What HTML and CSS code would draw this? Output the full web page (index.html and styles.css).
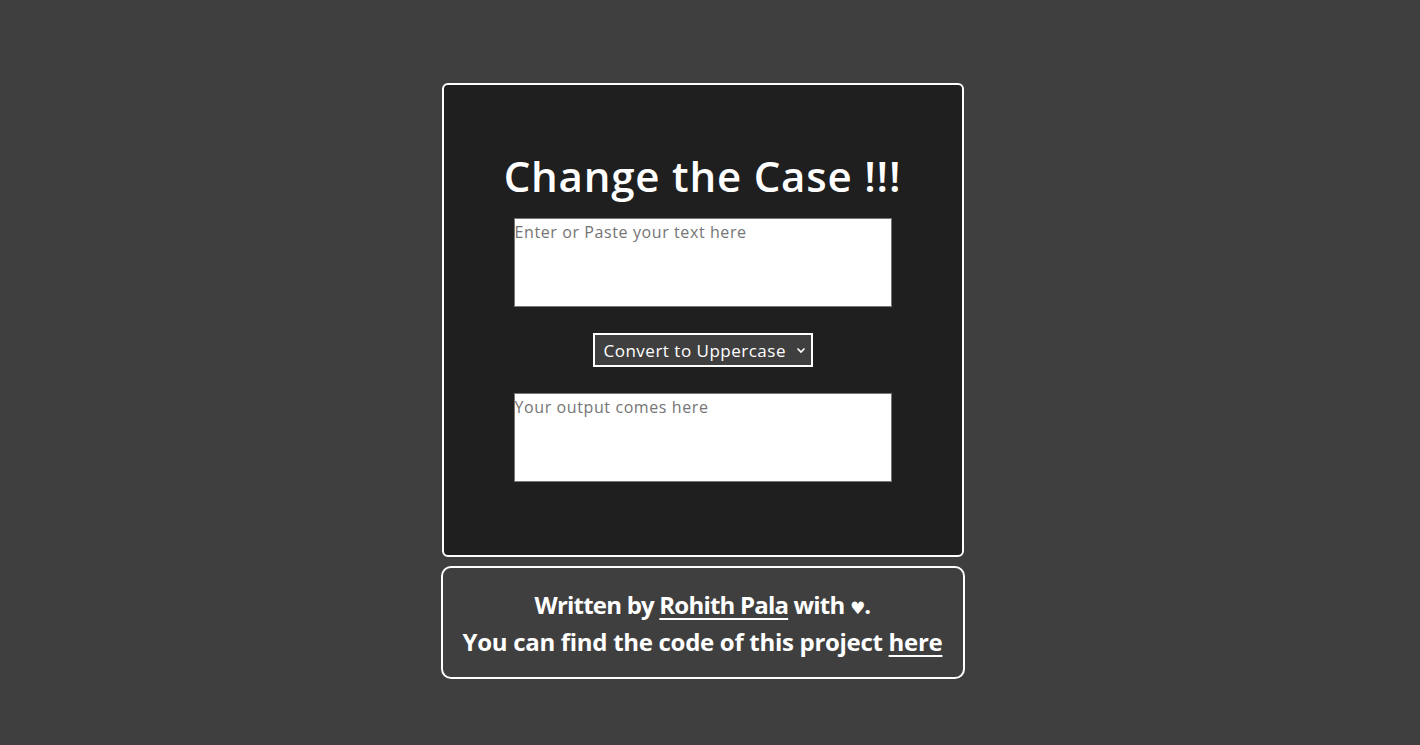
FILE: index.html
```html
<!DOCTYPE html>
<html>
<head>
<meta charset="utf-8">
<link rel="stylesheet" href="styles.css">
</head>
<body>
<main class="page">
  <section class="card">
    <h1 class="title">Change the Case !!!</h1>
    <textarea class="box" placeholder="Enter or Paste your text here"></textarea>
    <div class="select">Convert to Uppercase <svg class="chev" width="10" height="7" viewBox="0 0 10 7"><path d="M1.5 1.5 L5 5 L8.5 1.5" fill="none" stroke="#fff" stroke-width="1.6"/></svg></div>
    <textarea class="box" placeholder="Your output comes here"></textarea>
  </section>
  <footer class="foot">
    <p class="line1">Written by <a href="#">Rohith Pala</a> with <span class="heart">&#9829;</span>.</p>
    <p>You can find the code of this project <a href="#">here</a></p>
  </footer>
</main>
</body>
</html>
```
FILE: styles.css
```css
html, body { margin: 0; padding: 0; }
body {
  background: #3f3f3f;
  font-family: "Open Sans", "DejaVu Sans", sans-serif;
  color: #fff;
  height: 745px;
}
.page {
  display: flex;
  flex-direction: column;
  align-items: center;
  padding-top: 83px;
  padding-right: 15px;
  gap: 9px;
}
.card {
  width: 518px;
  height: 470px;
  box-sizing: content-box;
  border: 2px solid #fff;
  border-radius: 6px;
  background: #1f1f1f;
  display: flex;
  flex-direction: column;
  align-items: center;
}
.title {
  margin: 63px 0 0;
  font-size: 42px;
  font-weight: 600;
  line-height: 56px;
  height: 70px;
  letter-spacing: 0.8px;
}
.box {
  display: block;
  box-sizing: border-box;
  width: 378px;
  height: 89px;
  margin: 0;
  border: 1px solid #767676;
  padding: 0;
  resize: none;
  font-family: inherit;
  font-size: 16px;
  letter-spacing: 0.6px;
  line-height: 26px;
  background: #fff;
}
.box::placeholder { color: #757575; }
.select {
  box-sizing: border-box;
  margin: 26px 0;
  height: 34px;
  width: 220px;
  border: 2px solid #fff;
  background: #3f3f3f;
  display: flex;
  align-items: center;
  justify-content: space-between;
  padding: 0 5px 0 9px;
  font-size: 17px;
  letter-spacing: 0.5px;
}
.chev { display: block; }
.foot {
  width: 520px;
  height: 109px;
  box-sizing: content-box;
  border: 2px solid #fff;
  border-radius: 10px;
  display: flex;
  flex-direction: column;
  justify-content: center;
  align-items: center;
  font-size: 24px;
  font-weight: 700;
  letter-spacing: -0.3px;
}
.foot p { margin: 0; line-height: 35px; }
.foot .line1 { letter-spacing: -0.8px; margin-bottom: -1px; }
.foot a { color: #fff; text-decoration: underline; text-decoration-thickness: 2px; text-underline-offset: 4px; }
.heart { font-size: 17px; }
```
